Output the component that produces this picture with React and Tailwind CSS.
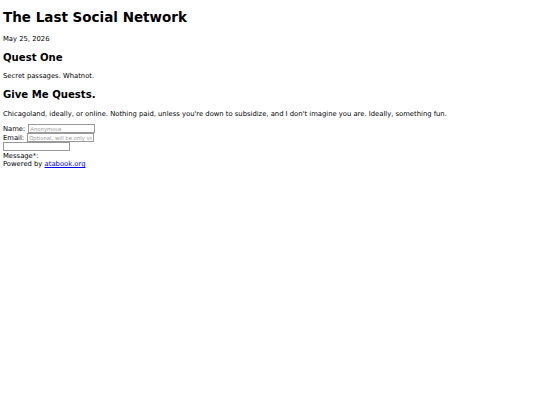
export default function App() {
  return (
    <div className="min-h-screen bg-white px-[3px] text-[6.8px] leading-[8px] text-black font-['DejaVu_Sans',Verdana,sans-serif]">
      <h1 className="pt-[9px] text-[13.5px] font-bold leading-[16px]">The Last Social Network</h1>
      <p className="mt-[10px]">May 25, 2026</p>

      <h2 className="mt-[9px] text-[10.125px] font-bold leading-[12px]">Quest One</h2>
      <p className="mt-[8px]">Secret passages. Whatnot.</p>

      <h2 className="mt-[9px] text-[10.125px] font-bold leading-[12px]">Give Me Quests.</h2>
      <p className="mt-[9px]">
        Chicagoland, ideally, or online. Nothing paid, unless you're down to subsidize, and I don't imagine
        you are. Ideally, something fun.
      </p>

      <form className="mt-[6px] flex flex-col">
        <div className="flex h-[9px] items-center gap-[3px]">
          <label>Name:</label>
          <input
            type="text"
            placeholder="Anonymous"
            className="h-[9px] w-[67px] border border-[#999] px-[1px] text-[5.3px] placeholder:text-[#999]"
          />
        </div>
        <div className="flex h-[9px] items-center gap-[3px]">
          <label>Email:</label>
          <input
            type="text"
            placeholder="Optional, will be only visible to the site owner"
            className="h-[9px] w-[67px] border border-[#999] px-[1px] text-[5.3px] placeholder:text-[#999]"
          />
        </div>
        <input type="text" className="h-[9px] w-[67px] border border-[#999]" />
        <label className="mt-[1px] leading-[8px]">Message*:</label>
        <p>
          Powered by{" "}
          <a href="#" className="text-[#0000ee] underline">
            atabook.org
          </a>
        </p>
      </form>
    </div>
  );
}
